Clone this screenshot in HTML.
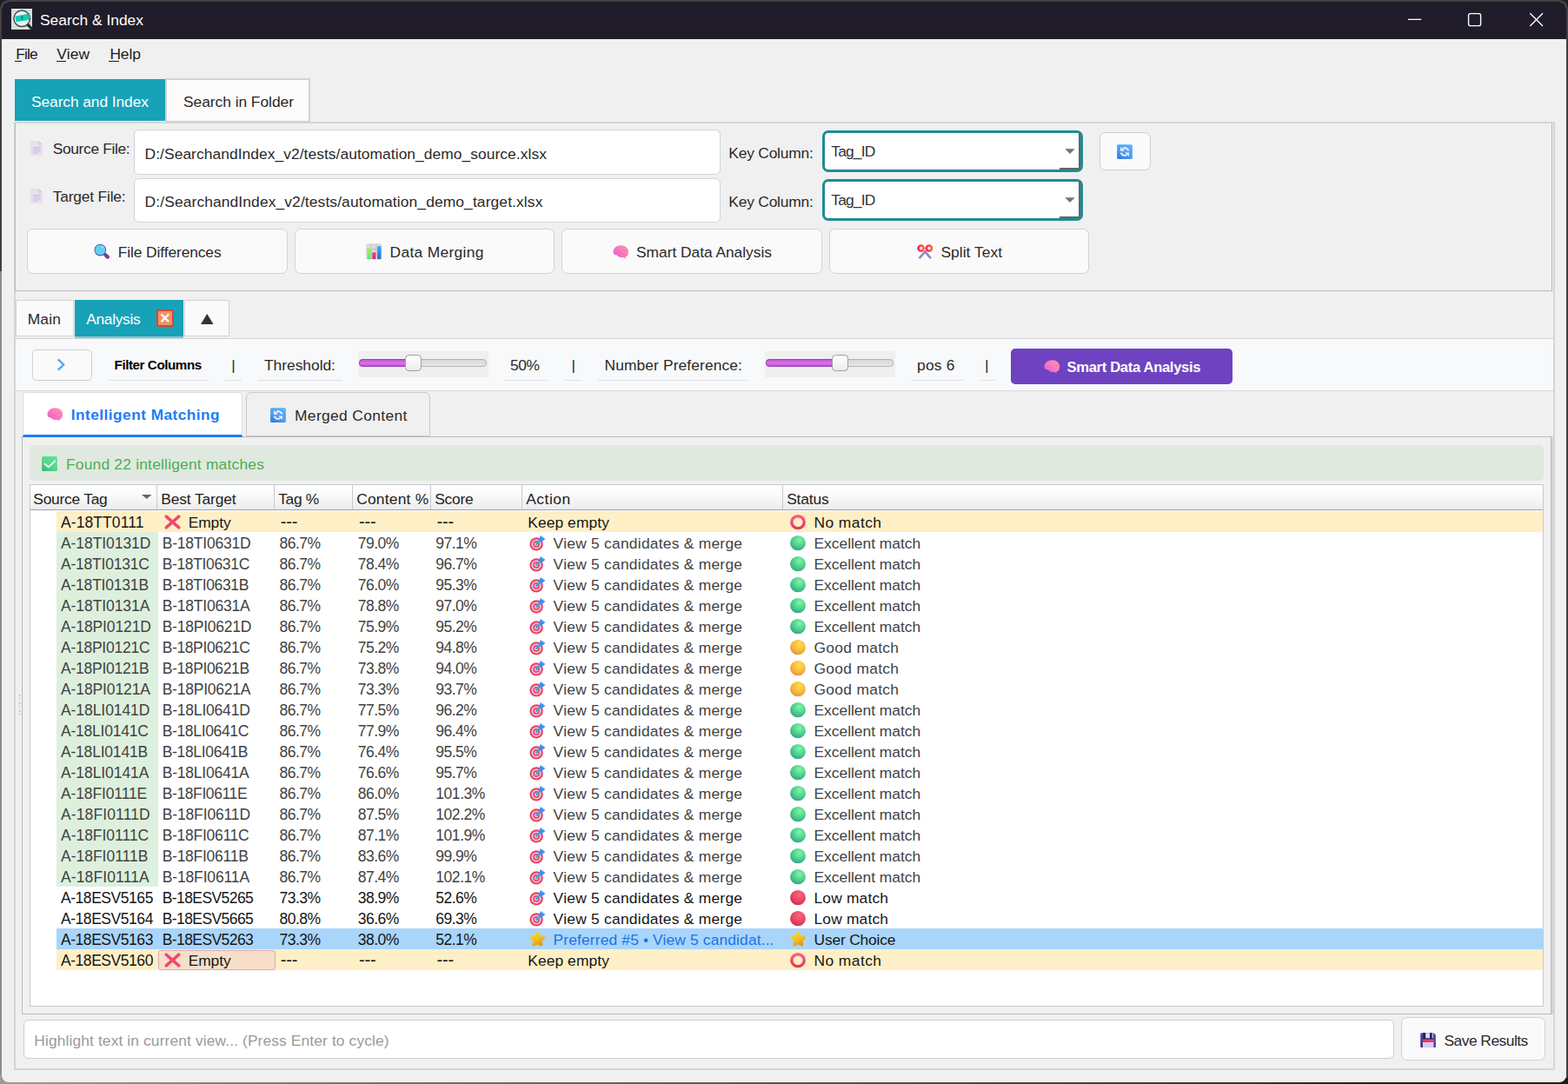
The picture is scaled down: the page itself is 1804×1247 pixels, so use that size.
<!DOCTYPE html>
<html lang="en"><head><meta charset="utf-8"><title>Search &amp; Index</title>
<style>
html,body{margin:0;padding:0}
body{width:1804px;height:1247px;overflow:hidden;background:#2b2b2b;position:relative;font-family:"Liberation Sans",sans-serif;}
div,span.t,svg{position:absolute;box-sizing:border-box}
span.t{white-space:nowrap;line-height:1;}
svg{overflow:visible}
</style></head><body>
<div style="left:0px;top:0px;width:1804px;height:1247px;background:#1c1c1c"></div>
<div style="left:0px;top:0px;width:1804px;height:1247px;background:linear-gradient(#211c29 0,#211c29 40px,#f0f0f0 40px);border:2px solid #404040;border-radius:10px"></div>
<div style="left:0px;top:312px;width:2.2px;height:935px;background:#8e8e8e"></div>
<div style="left:0px;top:1236px;width:12px;height:11px;background:#9a9a9a"></div>
<div style="left:0px;top:1240px;width:1804px;height:7px;background:linear-gradient(90deg,#9a9a9a 0%,#777 20%,#555 50%,#333 80%,#1c1c1c 88%)"></div>
<div id="win" style="left:2px;top:2px;width:1800px;height:1242.6px;background:#f0f0f0;border-radius:8px;overflow:hidden">
<div style="left:-2px;top:-2px;width:1804px;height:1247px">
<div style="left:0px;top:0px;width:1804px;height:44.6px;background:#211c29"></div>
<svg style="left:13px;top:10px;overflow:hidden" width="24" height="24" viewBox="0 0 24 24">
<defs><clipPath id="lens"><circle cx="12.2" cy="11.3" r="8.8"/></clipPath></defs>
<rect x="0" y="0" width="24" height="24" fill="#e3e6e4"/>
<path d="M0 2.5H24M0 5.5H24M0 8.5H24M0 11.5H24M0 14.5H24M0 17.5H24M0 20.5H24M0 23H24" stroke="#c9cecb" stroke-width="1"/>
<circle cx="12.2" cy="11.3" r="9.3" fill="#eef1f0" stroke="#3c5450" stroke-width="1.5"/>
<path d="M4.2 8.7 L21.4 5.5 L22 12.5 L5.6 15.2 Z" fill="#10cdb8" clip-path="url(#lens)"/>
<rect x="11" y="8" width="2.6" height="5" rx="1.2" fill="#0aa08f"/>
<path d="M18.8 18.2 L24 23.6" stroke="#18302c" stroke-width="3.2" stroke-linecap="butt"/>
</svg>
<span class="t" style="left:46.00px;top:14.60px;font-size:17.4px;color:#fff;letter-spacing:0.003px;">Search &amp; Index</span>
<svg style="left:1610px;top:10px" width="180" height="26" viewBox="1610 10 180 26" fill="none" stroke="#fff" stroke-width="1.4">
<path d="M1620 22.4H1635.3"/>
<rect x="1689.6" y="15.6" width="14" height="14" rx="2.2"/>
<path d="M1760.3 15.3L1775 30M1775 15.3L1760.3 30"/>
</svg>
<span class="t" style="left:18.30px;top:53.60px;font-size:17.4px;color:#1a1a1a;letter-spacing:-0.910px;">File</span>
<div style="left:17px;top:70px;width:8.3px;height:1px;background:#1a1a1a"></div>
<span class="t" style="left:65.30px;top:53.60px;font-size:17.4px;color:#1a1a1a;letter-spacing:0.118px;">View</span>
<div style="left:65px;top:70px;width:11px;height:1px;background:#1a1a1a"></div>
<span class="t" style="left:126.40px;top:53.60px;font-size:17.4px;color:#1a1a1a;letter-spacing:-0.097px;">Help</span>
<div style="left:125.3px;top:70px;width:11.8px;height:1px;background:#1a1a1a"></div>
<div style="left:16px;top:140px;width:1772.7px;height:1090.9px;border:2px solid #d6d5d5"></div>
<div style="left:17px;top:91.3px;width:172.5px;height:47.7px;background:#17a2b8"></div>
<span class="t" style="left:36.00px;top:108.60px;font-size:17.4px;color:#fff;letter-spacing:-0.093px;">Search and Index</span>
<div style="left:190.3px;top:90px;width:167.2px;height:51.2px;background:#fbfbfb;border:2px solid #d3d2d2"></div>
<span class="t" style="left:211.00px;top:108.60px;font-size:17.4px;color:#2a2a2a;letter-spacing:-0.044px;">Search in Folder</span>
<div style="left:17px;top:142px;width:1769px;height:192.7px;border:1px solid #b9b9b9;border-top:none"></div>
<svg style="left:35px;top:162px" width="14" height="17" viewBox="0 0 14 17">
<path d="M0 0H9.5L14 4.5V17H0Z" fill="#e7dff1"/><path d="M9.5 0V4.5H14Z" fill="#d2c6e2"/>
<path d="M3 7.6H11.5M3 9.8H11.5M3 12H11.5M3 14.1H8.5" stroke="#c2b6d8" stroke-width="0.9"/></svg>
<span class="t" style="left:60.70px;top:162.60px;font-size:17.4px;color:#2a2a2a;letter-spacing:-0.348px;">Source File:</span>
<div style="left:154px;top:149px;width:674.5px;height:51.5px;background:#fff;border:1px solid #cdd5dd;border-radius:6px"></div>
<span class="t" style="left:166.60px;top:168.60px;font-size:17.4px;color:#2a2a2a;letter-spacing:0.058px;">D:/SearchandIndex_v2/tests/automation_demo_source.xlsx</span>
<span class="t" style="left:838.30px;top:167.60px;font-size:17.4px;color:#2a2a2a;letter-spacing:-0.201px;">Key Column:</span>
<div style="left:946px;top:150px;width:299.5px;height:47.5px;background:#fff;border:3px solid #1c8c96;border-radius:7px"></div>
<span class="t" style="left:956.30px;top:165.60px;font-size:17.4px;color:#333;letter-spacing:-0.825px;">Tag_ID</span>
<svg style="left:1224.5px;top:171.2px" width="12" height="6.2" viewBox="0 0 12 6.2"><path d="M0.2 0.2H11.8L6 6Z" fill="#757575"/></svg>
<div style="left:1218.5px;top:192.9px;width:24px;height:1.8px;background:#666"></div>
<div style="left:1241.2px;top:153px;width:1.8px;height:41.5px;background:#666"></div>
<div style="left:1265.3px;top:151.8px;width:59.2px;height:44.2px;background:#fafafa;border:1.3px solid #d0d0d0;border-radius:7px"></div>
<svg style="left:35px;top:217px" width="14" height="17" viewBox="0 0 14 17">
<path d="M0 0H9.5L14 4.5V17H0Z" fill="#e7dff1"/><path d="M9.5 0V4.5H14Z" fill="#d2c6e2"/>
<path d="M3 7.6H11.5M3 9.8H11.5M3 12H11.5M3 14.1H8.5" stroke="#c2b6d8" stroke-width="0.9"/></svg>
<span class="t" style="left:60.70px;top:217.60px;font-size:17.4px;color:#2a2a2a;letter-spacing:-0.187px;">Target File:</span>
<div style="left:154px;top:204.5px;width:674.5px;height:51.5px;background:#fff;border:1px solid #cdd5dd;border-radius:6px"></div>
<span class="t" style="left:166.60px;top:223.60px;font-size:17.4px;color:#2a2a2a;letter-spacing:0.119px;">D:/SearchandIndex_v2/tests/automation_demo_target.xlsx</span>
<span class="t" style="left:838.30px;top:223.60px;font-size:17.4px;color:#2a2a2a;letter-spacing:-0.201px;">Key Column:</span>
<div style="left:946px;top:206px;width:299.5px;height:47.5px;background:#fff;border:3px solid #1c8c96;border-radius:7px"></div>
<span class="t" style="left:956.30px;top:221.60px;font-size:17.4px;color:#333;letter-spacing:-0.825px;">Tag_ID</span>
<svg style="left:1224.5px;top:227.2px" width="12" height="6.2" viewBox="0 0 12 6.2"><path d="M0.2 0.2H11.8L6 6Z" fill="#757575"/></svg>
<div style="left:1218.5px;top:248.9px;width:24px;height:1.8px;background:#666"></div>
<div style="left:1241.2px;top:209px;width:1.8px;height:41.5px;background:#666"></div>
<div style="left:31px;top:263px;width:299.5px;height:51.5px;background:#fafafa;border:1px solid #d3d3d3;border-radius:7px"></div>
<span class="t" style="left:135.70px;top:281.60px;font-size:17.4px;color:#2a2a2a;letter-spacing:-0.104px;">File Differences</span>
<div style="left:338.5px;top:263px;width:299.5px;height:51.5px;background:#fafafa;border:1px solid #d3d3d3;border-radius:7px"></div>
<span class="t" style="left:448.50px;top:281.60px;font-size:17.4px;color:#2a2a2a;letter-spacing:0.323px;">Data Merging</span>
<div style="left:646px;top:263px;width:299.5px;height:51.5px;background:#fafafa;border:1px solid #d3d3d3;border-radius:7px"></div>
<span class="t" style="left:732.00px;top:281.60px;font-size:17.4px;color:#2a2a2a;letter-spacing:-0.036px;">Smart Data Analysis</span>
<div style="left:953.5px;top:263px;width:299.5px;height:51.5px;background:#fafafa;border:1px solid #d3d3d3;border-radius:7px"></div>
<span class="t" style="left:1082.50px;top:281.60px;font-size:17.4px;color:#2a2a2a;letter-spacing:0.025px;">Split Text</span>
<svg style="left:0;top:0" width="0" height="0"><defs>
<radialGradient id="gGreen" cx="0.6" cy="0.3" r="0.75"><stop offset="0" stop-color="#7df7a6"/><stop offset="0.55" stop-color="#4fd08c"/><stop offset="1" stop-color="#2f9f8a"/></radialGradient>
<radialGradient id="gYellow" cx="0.6" cy="0.3" r="0.75"><stop offset="0" stop-color="#ffdc58"/><stop offset="0.55" stop-color="#f8bb38"/><stop offset="1" stop-color="#e39048"/></radialGradient>
<radialGradient id="gRed" cx="0.6" cy="0.3" r="0.75"><stop offset="0" stop-color="#ff6484"/><stop offset="0.55" stop-color="#ea4863"/><stop offset="1" stop-color="#c23050"/></radialGradient>
<linearGradient id="gRing" x1="0" y1="0" x2="0" y2="1"><stop offset="0" stop-color="#ff5a8c"/><stop offset="1" stop-color="#e23a58"/></linearGradient>
<linearGradient id="gStar" x1="0.2" y1="0" x2="0.7" y2="1"><stop offset="0" stop-color="#fbd22a"/><stop offset="0.6" stop-color="#f2bb1e"/><stop offset="1" stop-color="#dc9a1a"/></linearGradient>
<linearGradient id="gBrain" x1="0.9" y1="0.1" x2="0.1" y2="0.9"><stop offset="0" stop-color="#ff92a4"/><stop offset="0.5" stop-color="#fa78c2"/><stop offset="1" stop-color="#ea5acb"/></linearGradient>
<linearGradient id="gSq" x1="0.8" y1="0" x2="0.2" y2="1"><stop offset="0" stop-color="#5cb2fb"/><stop offset="0.6" stop-color="#4c9df3"/><stop offset="1" stop-color="#3a78df"/></linearGradient>
<linearGradient id="gChk" x1="0.8" y1="0" x2="0.2" y2="1"><stop offset="0" stop-color="#62e39a"/><stop offset="0.6" stop-color="#55d48b"/><stop offset="1" stop-color="#3fb578"/></linearGradient>
<linearGradient id="gSci" x1="0" y1="0" x2="1" y2="0"><stop offset="0" stop-color="#f21f7c"/><stop offset="1" stop-color="#ff6e1c"/></linearGradient>
<linearGradient id="gBarG" x1="0" y1="0" x2="0" y2="1"><stop offset="0" stop-color="#b0f05a"/><stop offset="1" stop-color="#56e39c"/></linearGradient>
<linearGradient id="gBarB" x1="0" y1="0" x2="0" y2="1"><stop offset="0" stop-color="#35aaf5"/><stop offset="1" stop-color="#2f68cc"/></linearGradient>
<linearGradient id="gBarR" x1="0" y1="0" x2="0" y2="1"><stop offset="0" stop-color="#f53a86"/><stop offset="1" stop-color="#e0285a"/></linearGradient>
<linearGradient id="gFlop" x1="0" y1="0" x2="0" y2="1"><stop offset="0" stop-color="#4f4ca2"/><stop offset="1" stop-color="#4a2c7c"/></linearGradient>
<linearGradient id="gFlopR" x1="0" y1="0" x2="1" y2="0"><stop offset="0" stop-color="#ee2440"/><stop offset="1" stop-color="#de3282"/></linearGradient>
</defs></svg>
<svg style="left:108px;top:281px" width="19" height="18" viewBox="0 0 19 18">
<path d="M13 12L15.9 14.6" stroke="#7f3d8e" stroke-width="4.3" stroke-linecap="round"/>
<circle cx="7.3" cy="6.6" r="6.85" fill="#4450ac"/><circle cx="7.3" cy="6.6" r="6" fill="#63cfec"/>
<circle cx="9.6" cy="3.7" r="0.9" fill="#c4ecf8"/></svg>
<svg style="left:420.8px;top:279.6px" width="18.5" height="18.5" viewBox="0 0 18.5 18.5">
<rect x="0.2" y="0.2" width="18" height="18.1" rx="1.6" fill="#ddd8e7"/>
<path d="M6 0.4V18M11.8 0.4V18M0.4 6.6H18M0.4 12.4H18" stroke="#bcb3c9" stroke-width="0.8"/>
<rect x="1.5" y="5.3" width="4.5" height="12.8" fill="url(#gBarG)"/>
<rect x="7.3" y="10.4" width="4" height="7.7" fill="url(#gBarR)"/>
<rect x="13.1" y="3.2" width="4.3" height="14.9" fill="url(#gBarB)"/></svg>
<svg style="left:704.9px;top:281.9px" width="18.4" height="16.00" viewBox="0 0 18.4 16">
<path d="M0.5 8.2C0.2 3.6 4.4 0.3 9.6 0.3C14.6 0.3 18.4 3.6 18.1 8.4C18 11.6 16.2 13.2 14.4 13.5L14.5 15.8L12.2 13.8C9.4 14.4 6.4 13.6 5 11.4C2.6 11.8 0.7 10.4 0.5 8.2Z" fill="url(#gBrain)"/>
<path d="M2.4 4.2L3.4 5M3.8 2.8L4.8 3.7M5.6 1.7L6.4 2.7" stroke="#f0609a" stroke-width="0.7"/>
<path d="M13 6.3H16M6 8.4C7.5 7.4 9 8 9.4 9.4M11.6 10.2L13 10.6" stroke="#f458c2" stroke-width="0.7" fill="none"/></svg>
<svg style="left:1054.9px;top:281px" width="19" height="17" viewBox="0 0 19 17">
<path d="M9.3 8.6L3.3 15.3M9.3 8.6L15.3 15.3" stroke="#9a84c2" stroke-width="2.6" stroke-linecap="round"/>
<circle cx="4.7" cy="4.6" r="3.1" fill="none" stroke="url(#gSci)" stroke-width="2.6"/>
<circle cx="13.9" cy="4.6" r="3.1" fill="none" stroke="url(#gSci)" stroke-width="2.6"/>
<circle cx="9.3" cy="8" r="1.1" fill="#f5503a"/></svg>
<svg style="left:1285.1px;top:165.8px" width="18" height="17.2" viewBox="0 0 18 17.2">
<rect x="0.1" y="0.2" width="17.8" height="16.9" rx="1.6" fill="url(#gSq)"/>
<path d="M13.4 7.4A4.6 4.6 0 0 0 6.8 4.9" fill="none" stroke="#fdeffd" stroke-width="1.9"/>
<path d="M4.1 3.1V7.7H8.8Z" fill="#fdeffd"/>
<path d="M4.6 9.8A4.6 4.6 0 0 0 11.2 12.3" fill="none" stroke="#fdeffd" stroke-width="1.9"/>
<path d="M13.9 14.1V9.5H9.2Z" fill="#fdeffd"/></svg>
<div style="left:18px;top:344.7px;width:67px;height:42.6px;background:#fafafa;border:1.3px solid #d3d3d3"></div>
<span class="t" style="left:31.70px;top:358.60px;font-size:17.4px;color:#2a2a2a;letter-spacing:0.159px;">Main</span>
<div style="left:85.9px;top:344.7px;width:124.8px;height:42.2px;background:#17a2b8"></div>
<div style="left:85.9px;top:387.4px;width:124.8px;height:1.2px;background:#8fc4cc"></div>
<span class="t" style="left:99.20px;top:358.60px;font-size:17.4px;color:#fff;letter-spacing:-0.328px;">Analysis</span>
<div style="left:179.6px;top:355.5px;width:20.8px;height:20.9px;background:#ee9468;border:2px solid #dc4632;border-radius:3px"></div>
<svg style="left:185.4px;top:361.3px" width="9.6" height="9.6" viewBox="0 0 10 10"><path d="M1.2 1.2L8.8 8.8M8.8 1.2L1.2 8.8" stroke="#fff" stroke-width="2.3" stroke-linecap="round"/></svg>
<div style="left:211.8px;top:344.7px;width:52px;height:42.6px;background:#fafafa;border:1.3px solid #d3d3d3"></div>
<svg style="left:231px;top:361px" width="14.5" height="12" viewBox="0 0 14.5 12"><path d="M7.25 0L14.5 12H0Z" fill="#333"/></svg>
<div style="left:18px;top:388.5px;width:1768.5px;height:61.5px;background:#f8f9fa;border-top:1.5px solid #d4d4d4;border-bottom:1.2px solid #d6dade"></div>
<div style="left:37px;top:401.5px;width:68.5px;height:36px;background:#fafafa;border:1px solid #d0d0d0;border-radius:5px"></div>
<svg style="left:65px;top:412px" width="10" height="15" viewBox="0 0 10 15"><path d="M1.8 1.4L8.2 7.5L1.8 13.6" fill="none" stroke="#4da3f5" stroke-width="2.2"/></svg>
<div style="left:124.3px;top:436.6px;width:116.10000000000001px;height:1.1px;background:#dde1e6"></div>
<span class="t" style="left:131.60px;top:412.20px;font-size:15.2px;color:#000;font-weight:bold;letter-spacing:-0.440px;">Filter Columns</span>
<div style="left:259px;top:436.6px;width:19px;height:1.1px;background:#dde1e6"></div>
<span class="t" style="left:266.20px;top:411.60px;font-size:17.4px;color:#2a2a2a;">|</span>
<div style="left:296px;top:436.6px;width:97.5px;height:1.1px;background:#dde1e6"></div>
<span class="t" style="left:304.00px;top:411.60px;font-size:17.4px;color:#2a2a2a;letter-spacing:-0.024px;">Threshold:</span>
<div style="left:580px;top:436.6px;width:52px;height:1.1px;background:#dde1e6"></div>
<span class="t" style="left:587.00px;top:411.60px;font-size:17.4px;color:#2a2a2a;letter-spacing:-0.409px;">50%</span>
<div style="left:650px;top:436.6px;width:19px;height:1.1px;background:#dde1e6"></div>
<span class="t" style="left:657.50px;top:411.60px;font-size:17.4px;color:#2a2a2a;">|</span>
<div style="left:688px;top:436.6px;width:173.5px;height:1.1px;background:#dde1e6"></div>
<span class="t" style="left:695.50px;top:411.60px;font-size:17.4px;color:#2a2a2a;letter-spacing:0.108px;">Number Preference:</span>
<div style="left:1047.5px;top:436.6px;width:60.0px;height:1.1px;background:#dde1e6"></div>
<span class="t" style="left:1055.00px;top:411.60px;font-size:17.4px;color:#2a2a2a;letter-spacing:0.235px;">pos 6</span>
<div style="left:1126px;top:436.6px;width:19px;height:1.1px;background:#dde1e6"></div>
<span class="t" style="left:1133.00px;top:411.60px;font-size:17.4px;color:#2a2a2a;">|</span>
<div style="left:412px;top:404px;width:150px;height:30px;background:#efefef"></div>
<div style="left:413px;top:413.2px;width:147px;height:8.4px;background:linear-gradient(#d8d8d8,#e6e6e6);border:1px solid #b4b4b4;border-radius:4px"></div>
<div style="left:413px;top:413.2px;width:57.5px;height:8.4px;background:linear-gradient(#c254d6,#d873ea 50%,#c254d6);border:1px solid #9c3fb2;border-radius:4px"></div>
<div style="left:465.5px;top:408px;width:19.2px;height:19px;background:linear-gradient(#ffffff,#ececec);border:1px solid #9c9c9c;border-radius:4.5px"></div>
<div style="left:880px;top:404px;width:150px;height:30px;background:#efefef"></div>
<div style="left:881px;top:413.2px;width:147px;height:8.4px;background:linear-gradient(#d8d8d8,#e6e6e6);border:1px solid #b4b4b4;border-radius:4px"></div>
<div style="left:881px;top:413.2px;width:81px;height:8.4px;background:linear-gradient(#c254d6,#d873ea 50%,#c254d6);border:1px solid #9c3fb2;border-radius:4px"></div>
<div style="left:957px;top:408px;width:19.2px;height:19px;background:linear-gradient(#ffffff,#ececec);border:1px solid #9c9c9c;border-radius:4.5px"></div>
<div style="left:1163px;top:401px;width:255px;height:41.3px;background:#6f42c1;border-radius:5px"></div>
<svg style="left:1201.3px;top:414px" width="18.4" height="16.00" viewBox="0 0 18.4 16">
<path d="M0.5 8.2C0.2 3.6 4.4 0.3 9.6 0.3C14.6 0.3 18.4 3.6 18.1 8.4C18 11.6 16.2 13.2 14.4 13.5L14.5 15.8L12.2 13.8C9.4 14.4 6.4 13.6 5 11.4C2.6 11.8 0.7 10.4 0.5 8.2Z" fill="url(#gBrain)"/>
<path d="M2.4 4.2L3.4 5M3.8 2.8L4.8 3.7M5.6 1.7L6.4 2.7" stroke="#f0609a" stroke-width="0.7"/>
<path d="M13 6.3H16M6 8.4C7.5 7.4 9 8 9.4 9.4M11.6 10.2L13 10.6" stroke="#f458c2" stroke-width="0.7" fill="none"/></svg>
<span class="t" style="left:1227.50px;top:414.50px;font-size:16.6px;color:#fff;font-weight:bold;letter-spacing:-0.329px;">Smart Data Analysis</span>
<div style="left:25px;top:502.4px;width:1760.3px;height:664.6px;border:1.2px solid #b9b9b9;border-top:1.6px solid #bcbcbc;background:#f0f0f0"></div>
<div style="left:1785.3px;top:502.4px;width:1.6px;height:664.6px;background:#d6d5d5"></div>
<div style="left:25.5px;top:450.8px;width:253.5px;height:52px;background:#fff;border:1px solid #dcdcdc;border-bottom:3.2px solid #1a7df5;border-radius:5px 5px 0 0"></div>
<svg style="left:53.6px;top:468.7px" width="18.4" height="16.00" viewBox="0 0 18.4 16">
<path d="M0.5 8.2C0.2 3.6 4.4 0.3 9.6 0.3C14.6 0.3 18.4 3.6 18.1 8.4C18 11.6 16.2 13.2 14.4 13.5L14.5 15.8L12.2 13.8C9.4 14.4 6.4 13.6 5 11.4C2.6 11.8 0.7 10.4 0.5 8.2Z" fill="url(#gBrain)"/>
<path d="M2.4 4.2L3.4 5M3.8 2.8L4.8 3.7M5.6 1.7L6.4 2.7" stroke="#f0609a" stroke-width="0.7"/>
<path d="M13 6.3H16M6 8.4C7.5 7.4 9 8 9.4 9.4M11.6 10.2L13 10.6" stroke="#f458c2" stroke-width="0.7" fill="none"/></svg>
<span class="t" style="left:81.70px;top:468.70px;font-size:17.2px;color:#1a7df5;font-weight:bold;letter-spacing:0.500px;">Intelligent Matching</span>
<div style="left:283px;top:450.8px;width:212px;height:51.2px;background:#f0f0f0;border:1.4px solid #c9c9c9;border-radius:6px 6px 0 0"></div>
<svg style="left:310.6px;top:468.6px" width="18" height="17.2" viewBox="0 0 18 17.2">
<rect x="0.1" y="0.2" width="17.8" height="16.9" rx="1.6" fill="url(#gSq)"/>
<path d="M13.4 7.4A4.6 4.6 0 0 0 6.8 4.9" fill="none" stroke="#fdeffd" stroke-width="1.9"/>
<path d="M4.1 3.1V7.7H8.8Z" fill="#fdeffd"/>
<path d="M4.6 9.8A4.6 4.6 0 0 0 11.2 12.3" fill="none" stroke="#fdeffd" stroke-width="1.9"/>
<path d="M13.9 14.1V9.5H9.2Z" fill="#fdeffd"/></svg>
<span class="t" style="left:339.00px;top:469.60px;font-size:17.4px;color:#2a2a2a;letter-spacing:0.363px;">Merged Content</span>
<div style="left:34px;top:512.2px;width:1742px;height:41.3px;background:#dfe9df;border-radius:5px"></div>
<svg style="left:48.1px;top:524.8px" width="18" height="17.2" viewBox="0 0 18 17.2">
<rect x="0.1" y="0.1" width="17.8" height="17" rx="1.6" fill="url(#gChk)"/>
<path d="M3.5 8.7L7.7 12.4L15.2 5.3" stroke="#fff3ff" stroke-width="1.8" fill="none" stroke-linecap="round" stroke-linejoin="round"/></svg>
<span class="t" style="left:76.00px;top:525.60px;font-size:17.4px;color:#4caf50;letter-spacing:0.205px;">Found 22 intelligent matches</span>
<div style="left:34px;top:557px;width:1742.3px;height:600.5px;background:#fff;border:1px solid #c3ccd6"></div>
<div style="left:35px;top:558px;width:1740.3px;height:28.8px;background:linear-gradient(#fdfdfd 0%,#fbfbfb 35%,#ececec 100%);border-bottom:1.4px solid #a2a2a2"></div>
<span class="t" style="left:38.30px;top:565.60px;font-size:17.4px;color:#222;letter-spacing:-0.246px;">Source Tag</span>
<span class="t" style="left:185.20px;top:565.60px;font-size:17.4px;color:#222;letter-spacing:-0.120px;">Best Target</span>
<div style="left:180.0px;top:558px;width:1.2px;height:28px;background:#c9c9c9"></div>
<span class="t" style="left:320.20px;top:565.60px;font-size:17.4px;color:#222;letter-spacing:-0.339px;">Tag %</span>
<div style="left:315.0px;top:558px;width:1.2px;height:28px;background:#c9c9c9"></div>
<span class="t" style="left:410.20px;top:565.60px;font-size:17.4px;color:#222;letter-spacing:0.220px;">Content %</span>
<div style="left:405.0px;top:558px;width:1.2px;height:28px;background:#c9c9c9"></div>
<span class="t" style="left:500.20px;top:565.60px;font-size:17.4px;color:#222;letter-spacing:-0.237px;">Score</span>
<div style="left:495.0px;top:558px;width:1.2px;height:28px;background:#c9c9c9"></div>
<span class="t" style="left:605.20px;top:565.60px;font-size:17.4px;color:#222;letter-spacing:0.529px;">Action</span>
<div style="left:600.0px;top:558px;width:1.2px;height:28px;background:#c9c9c9"></div>
<span class="t" style="left:905.20px;top:565.60px;font-size:17.4px;color:#222;letter-spacing:-0.166px;">Status</span>
<div style="left:900.0px;top:558px;width:1.2px;height:28px;background:#c9c9c9"></div>
<svg style="left:162.5px;top:568.7px" width="11.5" height="5" viewBox="0 0 11.5 5"><path d="M0 0H11.5L5.75 5Z" fill="#666"/></svg>
<div style="left:65px;top:588px;width:1710.3px;height:24px;background:#ffefc6"></div>
<span class="t" style="left:70.00px;top:592.55px;font-size:17.5px;color:#161616;letter-spacing:0.079px;">A-18TT0111</span>
<svg style="left:189px;top:592px" width="19" height="17" viewBox="0 0 19 17">
<path d="M2.2 2.2L16.8 14.8M16.8 2.2L2.2 14.8" stroke="#f2496e" stroke-width="3.6" stroke-linecap="round"/></svg>
<span class="t" style="left:216.70px;top:592.60px;font-size:17.4px;color:#161616;letter-spacing:-0.078px;">Empty</span>
<span class="t" style="left:322.70px;top:590.30px;font-size:20px;color:#161616;letter-spacing:-0.190px;">---</span>
<span class="t" style="left:413.00px;top:590.30px;font-size:20px;color:#161616;letter-spacing:-0.190px;">---</span>
<span class="t" style="left:502.50px;top:590.30px;font-size:20px;color:#161616;letter-spacing:-0.190px;">---</span>
<span class="t" style="left:607.20px;top:592.60px;font-size:17.4px;color:#161616;letter-spacing:0.095px;">Keep empty</span>
<svg style="left:909.1px;top:591.6px" width="18" height="17.4" viewBox="0 0 18 17.4">
<ellipse cx="9" cy="8.7" rx="7.25" ry="6.95" fill="none" stroke="url(#gRing)" stroke-width="3.4"/></svg>
<span class="t" style="left:936.50px;top:592.60px;font-size:17.4px;color:#161616;letter-spacing:0.435px;">No match</span>
<div style="left:65px;top:612px;width:116.5px;height:24px;background:#ddf0dd"></div>
<span class="t" style="left:70.00px;top:616.55px;font-size:17.5px;color:#424242;letter-spacing:-0.073px;">A-18TI0131D</span>
<span class="t" style="left:186.70px;top:616.55px;font-size:17.5px;color:#424242;letter-spacing:-0.203px;">B-18TI0631D</span>
<span class="t" style="left:321.50px;top:616.55px;font-size:17.5px;color:#424242;letter-spacing:-0.544px;">86.7%</span>
<span class="t" style="left:411.80px;top:616.55px;font-size:17.5px;color:#424242;letter-spacing:-0.544px;">79.0%</span>
<span class="t" style="left:501.30px;top:616.55px;font-size:17.5px;color:#424242;letter-spacing:-0.544px;">97.1%</span>
<svg style="left:609px;top:615.6px" width="18.5" height="18" viewBox="0 0 18.5 18">
<circle cx="8.1" cy="9.9" r="7.7" fill="#ea4568"/><circle cx="8.1" cy="9.9" r="5.5" fill="#ead6e2"/>
<circle cx="8.1" cy="9.9" r="3.9" fill="#ea4568"/><circle cx="8.1" cy="9.9" r="2.2" fill="#e2cfdc"/><circle cx="8.1" cy="9.9" r="0.9" fill="#9a8f9d"/>
<path d="M8.5 9.5L13.4 4.6" stroke="#3fa4ee" stroke-width="2.6" stroke-linecap="round"/>
<path d="M11.2 5.4L12.4 0.8L14 0.2L14.5 2.2L16.2 1.2L16.3 3.2L18.2 3.2L17.4 5L13.2 7.4Z" fill="#3a90f0"/></svg>
<span class="t" style="left:636.60px;top:616.60px;font-size:17.4px;color:#424242;letter-spacing:0.250px;">View 5 candidates &amp; merge</span>
<svg style="left:909.1px;top:615.5px" width="18" height="17.4" viewBox="0 0 18 17.4">
<ellipse cx="9" cy="8.7" rx="8.95" ry="8.65" fill="url(#gGreen)"/></svg>
<span class="t" style="left:936.50px;top:616.60px;font-size:17.4px;color:#424242;letter-spacing:-0.009px;">Excellent match</span>
<div style="left:65px;top:636px;width:116.5px;height:24px;background:#ddf0dd"></div>
<span class="t" style="left:70.00px;top:640.55px;font-size:17.5px;color:#424242;letter-spacing:-0.221px;">A-18TI0131C</span>
<span class="t" style="left:186.70px;top:640.55px;font-size:17.5px;color:#424242;letter-spacing:-0.350px;">B-18TI0631C</span>
<span class="t" style="left:321.50px;top:640.55px;font-size:17.5px;color:#424242;letter-spacing:-0.544px;">86.7%</span>
<span class="t" style="left:411.80px;top:640.55px;font-size:17.5px;color:#424242;letter-spacing:-0.544px;">78.4%</span>
<span class="t" style="left:501.30px;top:640.55px;font-size:17.5px;color:#424242;letter-spacing:-0.544px;">96.7%</span>
<svg style="left:609px;top:639.6px" width="18.5" height="18" viewBox="0 0 18.5 18">
<circle cx="8.1" cy="9.9" r="7.7" fill="#ea4568"/><circle cx="8.1" cy="9.9" r="5.5" fill="#ead6e2"/>
<circle cx="8.1" cy="9.9" r="3.9" fill="#ea4568"/><circle cx="8.1" cy="9.9" r="2.2" fill="#e2cfdc"/><circle cx="8.1" cy="9.9" r="0.9" fill="#9a8f9d"/>
<path d="M8.5 9.5L13.4 4.6" stroke="#3fa4ee" stroke-width="2.6" stroke-linecap="round"/>
<path d="M11.2 5.4L12.4 0.8L14 0.2L14.5 2.2L16.2 1.2L16.3 3.2L18.2 3.2L17.4 5L13.2 7.4Z" fill="#3a90f0"/></svg>
<span class="t" style="left:636.60px;top:640.60px;font-size:17.4px;color:#424242;letter-spacing:0.250px;">View 5 candidates &amp; merge</span>
<svg style="left:909.1px;top:639.5px" width="18" height="17.4" viewBox="0 0 18 17.4">
<ellipse cx="9" cy="8.7" rx="8.95" ry="8.65" fill="url(#gGreen)"/></svg>
<span class="t" style="left:936.50px;top:640.60px;font-size:17.4px;color:#424242;letter-spacing:-0.009px;">Excellent match</span>
<div style="left:65px;top:660px;width:116.5px;height:24px;background:#ddf0dd"></div>
<span class="t" style="left:70.00px;top:664.55px;font-size:17.5px;color:#424242;letter-spacing:-0.207px;">A-18TI0131B</span>
<span class="t" style="left:186.70px;top:664.55px;font-size:17.5px;color:#424242;letter-spacing:-0.337px;">B-18TI0631B</span>
<span class="t" style="left:321.50px;top:664.55px;font-size:17.5px;color:#424242;letter-spacing:-0.544px;">86.7%</span>
<span class="t" style="left:411.80px;top:664.55px;font-size:17.5px;color:#424242;letter-spacing:-0.544px;">76.0%</span>
<span class="t" style="left:501.30px;top:664.55px;font-size:17.5px;color:#424242;letter-spacing:-0.544px;">95.3%</span>
<svg style="left:609px;top:663.6px" width="18.5" height="18" viewBox="0 0 18.5 18">
<circle cx="8.1" cy="9.9" r="7.7" fill="#ea4568"/><circle cx="8.1" cy="9.9" r="5.5" fill="#ead6e2"/>
<circle cx="8.1" cy="9.9" r="3.9" fill="#ea4568"/><circle cx="8.1" cy="9.9" r="2.2" fill="#e2cfdc"/><circle cx="8.1" cy="9.9" r="0.9" fill="#9a8f9d"/>
<path d="M8.5 9.5L13.4 4.6" stroke="#3fa4ee" stroke-width="2.6" stroke-linecap="round"/>
<path d="M11.2 5.4L12.4 0.8L14 0.2L14.5 2.2L16.2 1.2L16.3 3.2L18.2 3.2L17.4 5L13.2 7.4Z" fill="#3a90f0"/></svg>
<span class="t" style="left:636.60px;top:664.60px;font-size:17.4px;color:#424242;letter-spacing:0.250px;">View 5 candidates &amp; merge</span>
<svg style="left:909.1px;top:663.5px" width="18" height="17.4" viewBox="0 0 18 17.4">
<ellipse cx="9" cy="8.7" rx="8.95" ry="8.65" fill="url(#gGreen)"/></svg>
<span class="t" style="left:936.50px;top:664.60px;font-size:17.4px;color:#424242;letter-spacing:-0.009px;">Excellent match</span>
<div style="left:65px;top:684px;width:116.5px;height:24px;background:#ddf0dd"></div>
<span class="t" style="left:70.00px;top:688.55px;font-size:17.5px;color:#424242;letter-spacing:-0.078px;">A-18TI0131A</span>
<span class="t" style="left:186.70px;top:688.55px;font-size:17.5px;color:#424242;letter-spacing:-0.207px;">B-18TI0631A</span>
<span class="t" style="left:321.50px;top:688.55px;font-size:17.5px;color:#424242;letter-spacing:-0.544px;">86.7%</span>
<span class="t" style="left:411.80px;top:688.55px;font-size:17.5px;color:#424242;letter-spacing:-0.544px;">78.8%</span>
<span class="t" style="left:501.30px;top:688.55px;font-size:17.5px;color:#424242;letter-spacing:-0.544px;">97.0%</span>
<svg style="left:609px;top:687.6px" width="18.5" height="18" viewBox="0 0 18.5 18">
<circle cx="8.1" cy="9.9" r="7.7" fill="#ea4568"/><circle cx="8.1" cy="9.9" r="5.5" fill="#ead6e2"/>
<circle cx="8.1" cy="9.9" r="3.9" fill="#ea4568"/><circle cx="8.1" cy="9.9" r="2.2" fill="#e2cfdc"/><circle cx="8.1" cy="9.9" r="0.9" fill="#9a8f9d"/>
<path d="M8.5 9.5L13.4 4.6" stroke="#3fa4ee" stroke-width="2.6" stroke-linecap="round"/>
<path d="M11.2 5.4L12.4 0.8L14 0.2L14.5 2.2L16.2 1.2L16.3 3.2L18.2 3.2L17.4 5L13.2 7.4Z" fill="#3a90f0"/></svg>
<span class="t" style="left:636.60px;top:688.60px;font-size:17.4px;color:#424242;letter-spacing:0.250px;">View 5 candidates &amp; merge</span>
<svg style="left:909.1px;top:687.5px" width="18" height="17.4" viewBox="0 0 18 17.4">
<ellipse cx="9" cy="8.7" rx="8.95" ry="8.65" fill="url(#gGreen)"/></svg>
<span class="t" style="left:936.50px;top:688.60px;font-size:17.4px;color:#424242;letter-spacing:-0.009px;">Excellent match</span>
<div style="left:65px;top:708px;width:116.5px;height:24px;background:#ddf0dd"></div>
<span class="t" style="left:70.00px;top:712.55px;font-size:17.5px;color:#424242;letter-spacing:-0.106px;">A-18PI0121D</span>
<span class="t" style="left:186.70px;top:712.55px;font-size:17.5px;color:#424242;letter-spacing:-0.236px;">B-18PI0621D</span>
<span class="t" style="left:321.50px;top:712.55px;font-size:17.5px;color:#424242;letter-spacing:-0.544px;">86.7%</span>
<span class="t" style="left:411.80px;top:712.55px;font-size:17.5px;color:#424242;letter-spacing:-0.544px;">75.9%</span>
<span class="t" style="left:501.30px;top:712.55px;font-size:17.5px;color:#424242;letter-spacing:-0.544px;">95.2%</span>
<svg style="left:609px;top:711.6px" width="18.5" height="18" viewBox="0 0 18.5 18">
<circle cx="8.1" cy="9.9" r="7.7" fill="#ea4568"/><circle cx="8.1" cy="9.9" r="5.5" fill="#ead6e2"/>
<circle cx="8.1" cy="9.9" r="3.9" fill="#ea4568"/><circle cx="8.1" cy="9.9" r="2.2" fill="#e2cfdc"/><circle cx="8.1" cy="9.9" r="0.9" fill="#9a8f9d"/>
<path d="M8.5 9.5L13.4 4.6" stroke="#3fa4ee" stroke-width="2.6" stroke-linecap="round"/>
<path d="M11.2 5.4L12.4 0.8L14 0.2L14.5 2.2L16.2 1.2L16.3 3.2L18.2 3.2L17.4 5L13.2 7.4Z" fill="#3a90f0"/></svg>
<span class="t" style="left:636.60px;top:712.60px;font-size:17.4px;color:#424242;letter-spacing:0.250px;">View 5 candidates &amp; merge</span>
<svg style="left:909.1px;top:711.5px" width="18" height="17.4" viewBox="0 0 18 17.4">
<ellipse cx="9" cy="8.7" rx="8.95" ry="8.65" fill="url(#gGreen)"/></svg>
<span class="t" style="left:936.50px;top:712.60px;font-size:17.4px;color:#424242;letter-spacing:-0.009px;">Excellent match</span>
<div style="left:65px;top:732px;width:116.5px;height:24px;background:#ddf0dd"></div>
<span class="t" style="left:70.00px;top:736.55px;font-size:17.5px;color:#424242;letter-spacing:-0.254px;">A-18PI0121C</span>
<span class="t" style="left:186.70px;top:736.55px;font-size:17.5px;color:#424242;letter-spacing:-0.383px;">B-18PI0621C</span>
<span class="t" style="left:321.50px;top:736.55px;font-size:17.5px;color:#424242;letter-spacing:-0.544px;">86.7%</span>
<span class="t" style="left:411.80px;top:736.55px;font-size:17.5px;color:#424242;letter-spacing:-0.544px;">75.2%</span>
<span class="t" style="left:501.30px;top:736.55px;font-size:17.5px;color:#424242;letter-spacing:-0.544px;">94.8%</span>
<svg style="left:609px;top:735.6px" width="18.5" height="18" viewBox="0 0 18.5 18">
<circle cx="8.1" cy="9.9" r="7.7" fill="#ea4568"/><circle cx="8.1" cy="9.9" r="5.5" fill="#ead6e2"/>
<circle cx="8.1" cy="9.9" r="3.9" fill="#ea4568"/><circle cx="8.1" cy="9.9" r="2.2" fill="#e2cfdc"/><circle cx="8.1" cy="9.9" r="0.9" fill="#9a8f9d"/>
<path d="M8.5 9.5L13.4 4.6" stroke="#3fa4ee" stroke-width="2.6" stroke-linecap="round"/>
<path d="M11.2 5.4L12.4 0.8L14 0.2L14.5 2.2L16.2 1.2L16.3 3.2L18.2 3.2L17.4 5L13.2 7.4Z" fill="#3a90f0"/></svg>
<span class="t" style="left:636.60px;top:736.60px;font-size:17.4px;color:#424242;letter-spacing:0.250px;">View 5 candidates &amp; merge</span>
<svg style="left:909.1px;top:735.5px" width="18" height="17.4" viewBox="0 0 18 17.4">
<ellipse cx="9" cy="8.7" rx="8.95" ry="8.65" fill="url(#gYellow)"/></svg>
<span class="t" style="left:936.50px;top:736.60px;font-size:17.4px;color:#424242;letter-spacing:0.302px;">Good match</span>
<div style="left:65px;top:756px;width:116.5px;height:24px;background:#ddf0dd"></div>
<span class="t" style="left:70.00px;top:760.55px;font-size:17.5px;color:#424242;letter-spacing:-0.240px;">A-18PI0121B</span>
<span class="t" style="left:186.70px;top:760.55px;font-size:17.5px;color:#424242;letter-spacing:-0.370px;">B-18PI0621B</span>
<span class="t" style="left:321.50px;top:760.55px;font-size:17.5px;color:#424242;letter-spacing:-0.544px;">86.7%</span>
<span class="t" style="left:411.80px;top:760.55px;font-size:17.5px;color:#424242;letter-spacing:-0.544px;">73.8%</span>
<span class="t" style="left:501.30px;top:760.55px;font-size:17.5px;color:#424242;letter-spacing:-0.544px;">94.0%</span>
<svg style="left:609px;top:759.6px" width="18.5" height="18" viewBox="0 0 18.5 18">
<circle cx="8.1" cy="9.9" r="7.7" fill="#ea4568"/><circle cx="8.1" cy="9.9" r="5.5" fill="#ead6e2"/>
<circle cx="8.1" cy="9.9" r="3.9" fill="#ea4568"/><circle cx="8.1" cy="9.9" r="2.2" fill="#e2cfdc"/><circle cx="8.1" cy="9.9" r="0.9" fill="#9a8f9d"/>
<path d="M8.5 9.5L13.4 4.6" stroke="#3fa4ee" stroke-width="2.6" stroke-linecap="round"/>
<path d="M11.2 5.4L12.4 0.8L14 0.2L14.5 2.2L16.2 1.2L16.3 3.2L18.2 3.2L17.4 5L13.2 7.4Z" fill="#3a90f0"/></svg>
<span class="t" style="left:636.60px;top:760.60px;font-size:17.4px;color:#424242;letter-spacing:0.250px;">View 5 candidates &amp; merge</span>
<svg style="left:909.1px;top:759.5px" width="18" height="17.4" viewBox="0 0 18 17.4">
<ellipse cx="9" cy="8.7" rx="8.95" ry="8.65" fill="url(#gYellow)"/></svg>
<span class="t" style="left:936.50px;top:760.60px;font-size:17.4px;color:#424242;letter-spacing:0.302px;">Good match</span>
<div style="left:65px;top:780px;width:116.5px;height:24px;background:#ddf0dd"></div>
<span class="t" style="left:70.00px;top:784.55px;font-size:17.5px;color:#424242;letter-spacing:-0.111px;">A-18PI0121A</span>
<span class="t" style="left:186.70px;top:784.55px;font-size:17.5px;color:#424242;letter-spacing:-0.240px;">B-18PI0621A</span>
<span class="t" style="left:321.50px;top:784.55px;font-size:17.5px;color:#424242;letter-spacing:-0.544px;">86.7%</span>
<span class="t" style="left:411.80px;top:784.55px;font-size:17.5px;color:#424242;letter-spacing:-0.544px;">73.3%</span>
<span class="t" style="left:501.30px;top:784.55px;font-size:17.5px;color:#424242;letter-spacing:-0.544px;">93.7%</span>
<svg style="left:609px;top:783.6px" width="18.5" height="18" viewBox="0 0 18.5 18">
<circle cx="8.1" cy="9.9" r="7.7" fill="#ea4568"/><circle cx="8.1" cy="9.9" r="5.5" fill="#ead6e2"/>
<circle cx="8.1" cy="9.9" r="3.9" fill="#ea4568"/><circle cx="8.1" cy="9.9" r="2.2" fill="#e2cfdc"/><circle cx="8.1" cy="9.9" r="0.9" fill="#9a8f9d"/>
<path d="M8.5 9.5L13.4 4.6" stroke="#3fa4ee" stroke-width="2.6" stroke-linecap="round"/>
<path d="M11.2 5.4L12.4 0.8L14 0.2L14.5 2.2L16.2 1.2L16.3 3.2L18.2 3.2L17.4 5L13.2 7.4Z" fill="#3a90f0"/></svg>
<span class="t" style="left:636.60px;top:784.60px;font-size:17.4px;color:#424242;letter-spacing:0.250px;">View 5 candidates &amp; merge</span>
<svg style="left:909.1px;top:783.5px" width="18" height="17.4" viewBox="0 0 18 17.4">
<ellipse cx="9" cy="8.7" rx="8.95" ry="8.65" fill="url(#gYellow)"/></svg>
<span class="t" style="left:936.50px;top:784.60px;font-size:17.4px;color:#424242;letter-spacing:0.302px;">Good match</span>
<div style="left:65px;top:804px;width:116.5px;height:24px;background:#ddf0dd"></div>
<span class="t" style="left:70.00px;top:808.55px;font-size:17.5px;color:#424242;letter-spacing:-0.072px;">A-18LI0141D</span>
<span class="t" style="left:186.70px;top:808.55px;font-size:17.5px;color:#424242;letter-spacing:-0.202px;">B-18LI0641D</span>
<span class="t" style="left:321.50px;top:808.55px;font-size:17.5px;color:#424242;letter-spacing:-0.544px;">86.7%</span>
<span class="t" style="left:411.80px;top:808.55px;font-size:17.5px;color:#424242;letter-spacing:-0.544px;">77.5%</span>
<span class="t" style="left:501.30px;top:808.55px;font-size:17.5px;color:#424242;letter-spacing:-0.544px;">96.2%</span>
<svg style="left:609px;top:807.6px" width="18.5" height="18" viewBox="0 0 18.5 18">
<circle cx="8.1" cy="9.9" r="7.7" fill="#ea4568"/><circle cx="8.1" cy="9.9" r="5.5" fill="#ead6e2"/>
<circle cx="8.1" cy="9.9" r="3.9" fill="#ea4568"/><circle cx="8.1" cy="9.9" r="2.2" fill="#e2cfdc"/><circle cx="8.1" cy="9.9" r="0.9" fill="#9a8f9d"/>
<path d="M8.5 9.5L13.4 4.6" stroke="#3fa4ee" stroke-width="2.6" stroke-linecap="round"/>
<path d="M11.2 5.4L12.4 0.8L14 0.2L14.5 2.2L16.2 1.2L16.3 3.2L18.2 3.2L17.4 5L13.2 7.4Z" fill="#3a90f0"/></svg>
<span class="t" style="left:636.60px;top:808.60px;font-size:17.4px;color:#424242;letter-spacing:0.250px;">View 5 candidates &amp; merge</span>
<svg style="left:909.1px;top:807.5px" width="18" height="17.4" viewBox="0 0 18 17.4">
<ellipse cx="9" cy="8.7" rx="8.95" ry="8.65" fill="url(#gGreen)"/></svg>
<span class="t" style="left:936.50px;top:808.60px;font-size:17.4px;color:#424242;letter-spacing:-0.009px;">Excellent match</span>
<div style="left:65px;top:828px;width:116.5px;height:24px;background:#ddf0dd"></div>
<span class="t" style="left:70.00px;top:832.55px;font-size:17.5px;color:#424242;letter-spacing:-0.220px;">A-18LI0141C</span>
<span class="t" style="left:186.70px;top:832.55px;font-size:17.5px;color:#424242;letter-spacing:-0.349px;">B-18LI0641C</span>
<span class="t" style="left:321.50px;top:832.55px;font-size:17.5px;color:#424242;letter-spacing:-0.544px;">86.7%</span>
<span class="t" style="left:411.80px;top:832.55px;font-size:17.5px;color:#424242;letter-spacing:-0.544px;">77.9%</span>
<span class="t" style="left:501.30px;top:832.55px;font-size:17.5px;color:#424242;letter-spacing:-0.544px;">96.4%</span>
<svg style="left:609px;top:831.6px" width="18.5" height="18" viewBox="0 0 18.5 18">
<circle cx="8.1" cy="9.9" r="7.7" fill="#ea4568"/><circle cx="8.1" cy="9.9" r="5.5" fill="#ead6e2"/>
<circle cx="8.1" cy="9.9" r="3.9" fill="#ea4568"/><circle cx="8.1" cy="9.9" r="2.2" fill="#e2cfdc"/><circle cx="8.1" cy="9.9" r="0.9" fill="#9a8f9d"/>
<path d="M8.5 9.5L13.4 4.6" stroke="#3fa4ee" stroke-width="2.6" stroke-linecap="round"/>
<path d="M11.2 5.4L12.4 0.8L14 0.2L14.5 2.2L16.2 1.2L16.3 3.2L18.2 3.2L17.4 5L13.2 7.4Z" fill="#3a90f0"/></svg>
<span class="t" style="left:636.60px;top:832.60px;font-size:17.4px;color:#424242;letter-spacing:0.250px;">View 5 candidates &amp; merge</span>
<svg style="left:909.1px;top:831.5px" width="18" height="17.4" viewBox="0 0 18 17.4">
<ellipse cx="9" cy="8.7" rx="8.95" ry="8.65" fill="url(#gGreen)"/></svg>
<span class="t" style="left:936.50px;top:832.60px;font-size:17.4px;color:#424242;letter-spacing:-0.009px;">Excellent match</span>
<div style="left:65px;top:852px;width:116.5px;height:24px;background:#ddf0dd"></div>
<span class="t" style="left:70.00px;top:856.55px;font-size:17.5px;color:#424242;letter-spacing:-0.206px;">A-18LI0141B</span>
<span class="t" style="left:186.70px;top:856.55px;font-size:17.5px;color:#424242;letter-spacing:-0.336px;">B-18LI0641B</span>
<span class="t" style="left:321.50px;top:856.55px;font-size:17.5px;color:#424242;letter-spacing:-0.544px;">86.7%</span>
<span class="t" style="left:411.80px;top:856.55px;font-size:17.5px;color:#424242;letter-spacing:-0.544px;">76.4%</span>
<span class="t" style="left:501.30px;top:856.55px;font-size:17.5px;color:#424242;letter-spacing:-0.544px;">95.5%</span>
<svg style="left:609px;top:855.6px" width="18.5" height="18" viewBox="0 0 18.5 18">
<circle cx="8.1" cy="9.9" r="7.7" fill="#ea4568"/><circle cx="8.1" cy="9.9" r="5.5" fill="#ead6e2"/>
<circle cx="8.1" cy="9.9" r="3.9" fill="#ea4568"/><circle cx="8.1" cy="9.9" r="2.2" fill="#e2cfdc"/><circle cx="8.1" cy="9.9" r="0.9" fill="#9a8f9d"/>
<path d="M8.5 9.5L13.4 4.6" stroke="#3fa4ee" stroke-width="2.6" stroke-linecap="round"/>
<path d="M11.2 5.4L12.4 0.8L14 0.2L14.5 2.2L16.2 1.2L16.3 3.2L18.2 3.2L17.4 5L13.2 7.4Z" fill="#3a90f0"/></svg>
<span class="t" style="left:636.60px;top:856.60px;font-size:17.4px;color:#424242;letter-spacing:0.250px;">View 5 candidates &amp; merge</span>
<svg style="left:909.1px;top:855.5px" width="18" height="17.4" viewBox="0 0 18 17.4">
<ellipse cx="9" cy="8.7" rx="8.95" ry="8.65" fill="url(#gGreen)"/></svg>
<span class="t" style="left:936.50px;top:856.60px;font-size:17.4px;color:#424242;letter-spacing:-0.009px;">Excellent match</span>
<div style="left:65px;top:876px;width:116.5px;height:24px;background:#ddf0dd"></div>
<span class="t" style="left:70.00px;top:880.55px;font-size:17.5px;color:#424242;letter-spacing:-0.077px;">A-18LI0141A</span>
<span class="t" style="left:186.70px;top:880.55px;font-size:17.5px;color:#424242;letter-spacing:-0.206px;">B-18LI0641A</span>
<span class="t" style="left:321.50px;top:880.55px;font-size:17.5px;color:#424242;letter-spacing:-0.544px;">86.7%</span>
<span class="t" style="left:411.80px;top:880.55px;font-size:17.5px;color:#424242;letter-spacing:-0.544px;">76.6%</span>
<span class="t" style="left:501.30px;top:880.55px;font-size:17.5px;color:#424242;letter-spacing:-0.544px;">95.7%</span>
<svg style="left:609px;top:879.6px" width="18.5" height="18" viewBox="0 0 18.5 18">
<circle cx="8.1" cy="9.9" r="7.7" fill="#ea4568"/><circle cx="8.1" cy="9.9" r="5.5" fill="#ead6e2"/>
<circle cx="8.1" cy="9.9" r="3.9" fill="#ea4568"/><circle cx="8.1" cy="9.9" r="2.2" fill="#e2cfdc"/><circle cx="8.1" cy="9.9" r="0.9" fill="#9a8f9d"/>
<path d="M8.5 9.5L13.4 4.6" stroke="#3fa4ee" stroke-width="2.6" stroke-linecap="round"/>
<path d="M11.2 5.4L12.4 0.8L14 0.2L14.5 2.2L16.2 1.2L16.3 3.2L18.2 3.2L17.4 5L13.2 7.4Z" fill="#3a90f0"/></svg>
<span class="t" style="left:636.60px;top:880.60px;font-size:17.4px;color:#424242;letter-spacing:0.250px;">View 5 candidates &amp; merge</span>
<svg style="left:909.1px;top:879.5px" width="18" height="17.4" viewBox="0 0 18 17.4">
<ellipse cx="9" cy="8.7" rx="8.95" ry="8.65" fill="url(#gGreen)"/></svg>
<span class="t" style="left:936.50px;top:880.60px;font-size:17.4px;color:#424242;letter-spacing:-0.009px;">Excellent match</span>
<div style="left:65px;top:900px;width:116.5px;height:24px;background:#ddf0dd"></div>
<span class="t" style="left:70.00px;top:904.55px;font-size:17.5px;color:#424242;letter-spacing:-0.132px;">A-18FI0111E</span>
<span class="t" style="left:186.70px;top:904.55px;font-size:17.5px;color:#424242;letter-spacing:-0.391px;">B-18FI0611E</span>
<span class="t" style="left:321.50px;top:904.55px;font-size:17.5px;color:#424242;letter-spacing:-0.544px;">86.7%</span>
<span class="t" style="left:411.80px;top:904.55px;font-size:17.5px;color:#424242;letter-spacing:-0.544px;">86.0%</span>
<span class="t" style="left:501.30px;top:904.55px;font-size:17.5px;color:#424242;letter-spacing:-0.444px;">101.3%</span>
<svg style="left:609px;top:903.6px" width="18.5" height="18" viewBox="0 0 18.5 18">
<circle cx="8.1" cy="9.9" r="7.7" fill="#ea4568"/><circle cx="8.1" cy="9.9" r="5.5" fill="#ead6e2"/>
<circle cx="8.1" cy="9.9" r="3.9" fill="#ea4568"/><circle cx="8.1" cy="9.9" r="2.2" fill="#e2cfdc"/><circle cx="8.1" cy="9.9" r="0.9" fill="#9a8f9d"/>
<path d="M8.5 9.5L13.4 4.6" stroke="#3fa4ee" stroke-width="2.6" stroke-linecap="round"/>
<path d="M11.2 5.4L12.4 0.8L14 0.2L14.5 2.2L16.2 1.2L16.3 3.2L18.2 3.2L17.4 5L13.2 7.4Z" fill="#3a90f0"/></svg>
<span class="t" style="left:636.60px;top:904.60px;font-size:17.4px;color:#424242;letter-spacing:0.250px;">View 5 candidates &amp; merge</span>
<svg style="left:909.1px;top:903.5px" width="18" height="17.4" viewBox="0 0 18 17.4">
<ellipse cx="9" cy="8.7" rx="8.95" ry="8.65" fill="url(#gGreen)"/></svg>
<span class="t" style="left:936.50px;top:904.60px;font-size:17.4px;color:#424242;letter-spacing:-0.009px;">Excellent match</span>
<div style="left:65px;top:924px;width:116.5px;height:24px;background:#ddf0dd"></div>
<span class="t" style="left:70.00px;top:928.55px;font-size:17.5px;color:#424242;letter-spacing:0.123px;">A-18FI0111D</span>
<span class="t" style="left:186.70px;top:928.55px;font-size:17.5px;color:#424242;letter-spacing:-0.138px;">B-18FI0611D</span>
<span class="t" style="left:321.50px;top:928.55px;font-size:17.5px;color:#424242;letter-spacing:-0.544px;">86.7%</span>
<span class="t" style="left:411.80px;top:928.55px;font-size:17.5px;color:#424242;letter-spacing:-0.544px;">87.5%</span>
<span class="t" style="left:501.30px;top:928.55px;font-size:17.5px;color:#424242;letter-spacing:-0.444px;">102.2%</span>
<svg style="left:609px;top:927.6px" width="18.5" height="18" viewBox="0 0 18.5 18">
<circle cx="8.1" cy="9.9" r="7.7" fill="#ea4568"/><circle cx="8.1" cy="9.9" r="5.5" fill="#ead6e2"/>
<circle cx="8.1" cy="9.9" r="3.9" fill="#ea4568"/><circle cx="8.1" cy="9.9" r="2.2" fill="#e2cfdc"/><circle cx="8.1" cy="9.9" r="0.9" fill="#9a8f9d"/>
<path d="M8.5 9.5L13.4 4.6" stroke="#3fa4ee" stroke-width="2.6" stroke-linecap="round"/>
<path d="M11.2 5.4L12.4 0.8L14 0.2L14.5 2.2L16.2 1.2L16.3 3.2L18.2 3.2L17.4 5L13.2 7.4Z" fill="#3a90f0"/></svg>
<span class="t" style="left:636.60px;top:928.60px;font-size:17.4px;color:#424242;letter-spacing:0.250px;">View 5 candidates &amp; merge</span>
<svg style="left:909.1px;top:927.5px" width="18" height="17.4" viewBox="0 0 18 17.4">
<ellipse cx="9" cy="8.7" rx="8.95" ry="8.65" fill="url(#gGreen)"/></svg>
<span class="t" style="left:936.50px;top:928.60px;font-size:17.4px;color:#424242;letter-spacing:-0.009px;">Excellent match</span>
<div style="left:65px;top:948px;width:116.5px;height:24px;background:#ddf0dd"></div>
<span class="t" style="left:70.00px;top:952.55px;font-size:17.5px;color:#424242;letter-spacing:-0.025px;">A-18FI0111C</span>
<span class="t" style="left:186.70px;top:952.55px;font-size:17.5px;color:#424242;letter-spacing:-0.286px;">B-18FI0611C</span>
<span class="t" style="left:321.50px;top:952.55px;font-size:17.5px;color:#424242;letter-spacing:-0.544px;">86.7%</span>
<span class="t" style="left:411.80px;top:952.55px;font-size:17.5px;color:#424242;letter-spacing:-0.544px;">87.1%</span>
<span class="t" style="left:501.30px;top:952.55px;font-size:17.5px;color:#424242;letter-spacing:-0.444px;">101.9%</span>
<svg style="left:609px;top:951.6px" width="18.5" height="18" viewBox="0 0 18.5 18">
<circle cx="8.1" cy="9.9" r="7.7" fill="#ea4568"/><circle cx="8.1" cy="9.9" r="5.5" fill="#ead6e2"/>
<circle cx="8.1" cy="9.9" r="3.9" fill="#ea4568"/><circle cx="8.1" cy="9.9" r="2.2" fill="#e2cfdc"/><circle cx="8.1" cy="9.9" r="0.9" fill="#9a8f9d"/>
<path d="M8.5 9.5L13.4 4.6" stroke="#3fa4ee" stroke-width="2.6" stroke-linecap="round"/>
<path d="M11.2 5.4L12.4 0.8L14 0.2L14.5 2.2L16.2 1.2L16.3 3.2L18.2 3.2L17.4 5L13.2 7.4Z" fill="#3a90f0"/></svg>
<span class="t" style="left:636.60px;top:952.60px;font-size:17.4px;color:#424242;letter-spacing:0.250px;">View 5 candidates &amp; merge</span>
<svg style="left:909.1px;top:951.5px" width="18" height="17.4" viewBox="0 0 18 17.4">
<ellipse cx="9" cy="8.7" rx="8.95" ry="8.65" fill="url(#gGreen)"/></svg>
<span class="t" style="left:936.50px;top:952.60px;font-size:17.4px;color:#424242;letter-spacing:-0.009px;">Excellent match</span>
<div style="left:65px;top:972px;width:116.5px;height:24px;background:#ddf0dd"></div>
<span class="t" style="left:70.00px;top:976.55px;font-size:17.5px;color:#424242;letter-spacing:-0.011px;">A-18FI0111B</span>
<span class="t" style="left:186.70px;top:976.55px;font-size:17.5px;color:#424242;letter-spacing:-0.270px;">B-18FI0611B</span>
<span class="t" style="left:321.50px;top:976.55px;font-size:17.5px;color:#424242;letter-spacing:-0.544px;">86.7%</span>
<span class="t" style="left:411.80px;top:976.55px;font-size:17.5px;color:#424242;letter-spacing:-0.544px;">83.6%</span>
<span class="t" style="left:501.30px;top:976.55px;font-size:17.5px;color:#424242;letter-spacing:-0.544px;">99.9%</span>
<svg style="left:609px;top:975.6px" width="18.5" height="18" viewBox="0 0 18.5 18">
<circle cx="8.1" cy="9.9" r="7.7" fill="#ea4568"/><circle cx="8.1" cy="9.9" r="5.5" fill="#ead6e2"/>
<circle cx="8.1" cy="9.9" r="3.9" fill="#ea4568"/><circle cx="8.1" cy="9.9" r="2.2" fill="#e2cfdc"/><circle cx="8.1" cy="9.9" r="0.9" fill="#9a8f9d"/>
<path d="M8.5 9.5L13.4 4.6" stroke="#3fa4ee" stroke-width="2.6" stroke-linecap="round"/>
<path d="M11.2 5.4L12.4 0.8L14 0.2L14.5 2.2L16.2 1.2L16.3 3.2L18.2 3.2L17.4 5L13.2 7.4Z" fill="#3a90f0"/></svg>
<span class="t" style="left:636.60px;top:976.60px;font-size:17.4px;color:#424242;letter-spacing:0.250px;">View 5 candidates &amp; merge</span>
<svg style="left:909.1px;top:975.5px" width="18" height="17.4" viewBox="0 0 18 17.4">
<ellipse cx="9" cy="8.7" rx="8.95" ry="8.65" fill="url(#gGreen)"/></svg>
<span class="t" style="left:936.50px;top:976.60px;font-size:17.4px;color:#424242;letter-spacing:-0.009px;">Excellent match</span>
<div style="left:65px;top:996px;width:116.5px;height:24px;background:#ddf0dd"></div>
<span class="t" style="left:70.00px;top:1000.55px;font-size:17.5px;color:#424242;letter-spacing:0.118px;">A-18FI0111A</span>
<span class="t" style="left:186.70px;top:1000.55px;font-size:17.5px;color:#424242;letter-spacing:-0.141px;">B-18FI0611A</span>
<span class="t" style="left:321.50px;top:1000.55px;font-size:17.5px;color:#424242;letter-spacing:-0.544px;">86.7%</span>
<span class="t" style="left:411.80px;top:1000.55px;font-size:17.5px;color:#424242;letter-spacing:-0.544px;">87.4%</span>
<span class="t" style="left:501.30px;top:1000.55px;font-size:17.5px;color:#424242;letter-spacing:-0.444px;">102.1%</span>
<svg style="left:609px;top:999.6px" width="18.5" height="18" viewBox="0 0 18.5 18">
<circle cx="8.1" cy="9.9" r="7.7" fill="#ea4568"/><circle cx="8.1" cy="9.9" r="5.5" fill="#ead6e2"/>
<circle cx="8.1" cy="9.9" r="3.9" fill="#ea4568"/><circle cx="8.1" cy="9.9" r="2.2" fill="#e2cfdc"/><circle cx="8.1" cy="9.9" r="0.9" fill="#9a8f9d"/>
<path d="M8.5 9.5L13.4 4.6" stroke="#3fa4ee" stroke-width="2.6" stroke-linecap="round"/>
<path d="M11.2 5.4L12.4 0.8L14 0.2L14.5 2.2L16.2 1.2L16.3 3.2L18.2 3.2L17.4 5L13.2 7.4Z" fill="#3a90f0"/></svg>
<span class="t" style="left:636.60px;top:1000.60px;font-size:17.4px;color:#424242;letter-spacing:0.250px;">View 5 candidates &amp; merge</span>
<svg style="left:909.1px;top:999.5px" width="18" height="17.4" viewBox="0 0 18 17.4">
<ellipse cx="9" cy="8.7" rx="8.95" ry="8.65" fill="url(#gGreen)"/></svg>
<span class="t" style="left:936.50px;top:1000.60px;font-size:17.4px;color:#424242;letter-spacing:-0.009px;">Excellent match</span>
<span class="t" style="left:70.00px;top:1024.55px;font-size:17.5px;color:#161616;letter-spacing:-0.455px;">A-18ESV5165</span>
<span class="t" style="left:186.70px;top:1024.55px;font-size:17.5px;color:#161616;letter-spacing:-0.584px;">B-18ESV5265</span>
<span class="t" style="left:321.50px;top:1024.55px;font-size:17.5px;color:#161616;letter-spacing:-0.544px;">73.3%</span>
<span class="t" style="left:411.80px;top:1024.55px;font-size:17.5px;color:#161616;letter-spacing:-0.544px;">38.9%</span>
<span class="t" style="left:501.30px;top:1024.55px;font-size:17.5px;color:#161616;letter-spacing:-0.544px;">52.6%</span>
<svg style="left:609px;top:1023.6px" width="18.5" height="18" viewBox="0 0 18.5 18">
<circle cx="8.1" cy="9.9" r="7.7" fill="#ea4568"/><circle cx="8.1" cy="9.9" r="5.5" fill="#ead6e2"/>
<circle cx="8.1" cy="9.9" r="3.9" fill="#ea4568"/><circle cx="8.1" cy="9.9" r="2.2" fill="#e2cfdc"/><circle cx="8.1" cy="9.9" r="0.9" fill="#9a8f9d"/>
<path d="M8.5 9.5L13.4 4.6" stroke="#3fa4ee" stroke-width="2.6" stroke-linecap="round"/>
<path d="M11.2 5.4L12.4 0.8L14 0.2L14.5 2.2L16.2 1.2L16.3 3.2L18.2 3.2L17.4 5L13.2 7.4Z" fill="#3a90f0"/></svg>
<span class="t" style="left:636.60px;top:1024.60px;font-size:17.4px;color:#161616;letter-spacing:0.250px;">View 5 candidates &amp; merge</span>
<svg style="left:909.1px;top:1023.5px" width="18" height="17.4" viewBox="0 0 18 17.4">
<ellipse cx="9" cy="8.7" rx="8.95" ry="8.65" fill="url(#gRed)"/></svg>
<span class="t" style="left:936.50px;top:1024.60px;font-size:17.4px;color:#161616;letter-spacing:0.171px;">Low match</span>
<span class="t" style="left:70.00px;top:1048.55px;font-size:17.5px;color:#161616;letter-spacing:-0.455px;">A-18ESV5164</span>
<span class="t" style="left:186.70px;top:1048.55px;font-size:17.5px;color:#161616;letter-spacing:-0.584px;">B-18ESV5665</span>
<span class="t" style="left:321.50px;top:1048.55px;font-size:17.5px;color:#161616;letter-spacing:-0.544px;">80.8%</span>
<span class="t" style="left:411.80px;top:1048.55px;font-size:17.5px;color:#161616;letter-spacing:-0.544px;">36.6%</span>
<span class="t" style="left:501.30px;top:1048.55px;font-size:17.5px;color:#161616;letter-spacing:-0.544px;">69.3%</span>
<svg style="left:609px;top:1047.6px" width="18.5" height="18" viewBox="0 0 18.5 18">
<circle cx="8.1" cy="9.9" r="7.7" fill="#ea4568"/><circle cx="8.1" cy="9.9" r="5.5" fill="#ead6e2"/>
<circle cx="8.1" cy="9.9" r="3.9" fill="#ea4568"/><circle cx="8.1" cy="9.9" r="2.2" fill="#e2cfdc"/><circle cx="8.1" cy="9.9" r="0.9" fill="#9a8f9d"/>
<path d="M8.5 9.5L13.4 4.6" stroke="#3fa4ee" stroke-width="2.6" stroke-linecap="round"/>
<path d="M11.2 5.4L12.4 0.8L14 0.2L14.5 2.2L16.2 1.2L16.3 3.2L18.2 3.2L17.4 5L13.2 7.4Z" fill="#3a90f0"/></svg>
<span class="t" style="left:636.60px;top:1048.60px;font-size:17.4px;color:#161616;letter-spacing:0.250px;">View 5 candidates &amp; merge</span>
<svg style="left:909.1px;top:1047.5px" width="18" height="17.4" viewBox="0 0 18 17.4">
<ellipse cx="9" cy="8.7" rx="8.95" ry="8.65" fill="url(#gRed)"/></svg>
<span class="t" style="left:936.50px;top:1048.60px;font-size:17.4px;color:#161616;letter-spacing:0.171px;">Low match</span>
<div style="left:65px;top:1068px;width:1710.3px;height:24px;background:#a9d5fb"></div>
<span class="t" style="left:70.00px;top:1072.55px;font-size:17.5px;color:#161616;letter-spacing:-0.455px;">A-18ESV5163</span>
<span class="t" style="left:186.70px;top:1072.55px;font-size:17.5px;color:#161616;letter-spacing:-0.584px;">B-18ESV5263</span>
<span class="t" style="left:321.50px;top:1072.55px;font-size:17.5px;color:#161616;letter-spacing:-0.544px;">73.3%</span>
<span class="t" style="left:411.80px;top:1072.55px;font-size:17.5px;color:#161616;letter-spacing:-0.544px;">38.0%</span>
<span class="t" style="left:501.30px;top:1072.55px;font-size:17.5px;color:#161616;letter-spacing:-0.544px;">52.1%</span>
<svg style="left:609px;top:1071px" width="18.6" height="18.6" viewBox="0 0 18.6 18.6">
<path d="M9.3 2.4L11.5 6.9L16.3 7.5L12.8 10.9L13.7 15.8L9.3 13.4L4.9 15.8L5.8 10.9L2.3 7.5L7.1 6.9Z" fill="url(#gStar)" stroke="url(#gStar)" stroke-width="3.4" stroke-linejoin="round"/></svg>
<span class="t" style="left:636.60px;top:1072.60px;font-size:17.4px;color:#1a73e8;letter-spacing:0.140px;">Preferred #5 • View 5 candidat...</span>
<svg style="left:909px;top:1071.3px" width="18.6" height="18.6" viewBox="0 0 18.6 18.6">
<path d="M9.3 2.4L11.5 6.9L16.3 7.5L12.8 10.9L13.7 15.8L9.3 13.4L4.9 15.8L5.8 10.9L2.3 7.5L7.1 6.9Z" fill="url(#gStar)" stroke="url(#gStar)" stroke-width="3.4" stroke-linejoin="round"/></svg>
<span class="t" style="left:936.50px;top:1072.60px;font-size:17.4px;color:#161616;letter-spacing:-0.173px;">User Choice</span>
<div style="left:65px;top:1092px;width:1710.3px;height:24px;background:#ffefc6"></div>
<span class="t" style="left:70.00px;top:1096.55px;font-size:17.5px;color:#161616;letter-spacing:-0.455px;">A-18ESV5160</span>
<div style="left:182px;top:1092.5px;width:135px;height:23px;background:#f8dfca;border:1.2px solid #d9a9b0;border-radius:3px"></div>
<svg style="left:189px;top:1096px" width="19" height="17" viewBox="0 0 19 17">
<path d="M2.2 2.2L16.8 14.8M16.8 2.2L2.2 14.8" stroke="#f2496e" stroke-width="3.6" stroke-linecap="round"/></svg>
<span class="t" style="left:216.70px;top:1096.60px;font-size:17.4px;color:#161616;letter-spacing:-0.078px;">Empty</span>
<span class="t" style="left:322.70px;top:1094.30px;font-size:20px;color:#161616;letter-spacing:-0.190px;">---</span>
<span class="t" style="left:413.00px;top:1094.30px;font-size:20px;color:#161616;letter-spacing:-0.190px;">---</span>
<span class="t" style="left:502.50px;top:1094.30px;font-size:20px;color:#161616;letter-spacing:-0.190px;">---</span>
<span class="t" style="left:607.20px;top:1096.60px;font-size:17.4px;color:#161616;letter-spacing:0.095px;">Keep empty</span>
<svg style="left:909.1px;top:1095.6px" width="18" height="17.4" viewBox="0 0 18 17.4">
<ellipse cx="9" cy="8.7" rx="7.25" ry="6.95" fill="none" stroke="url(#gRing)" stroke-width="3.4"/></svg>
<span class="t" style="left:936.50px;top:1096.60px;font-size:17.4px;color:#161616;letter-spacing:0.435px;">No match</span>
<div style="left:22px;top:798.5px;width:1.2px;height:2px;background:#a8a8a8"></div>
<div style="left:22px;top:803.0px;width:1.2px;height:1px;background:#a8a8a8"></div>
<div style="left:22px;top:807.5px;width:1.2px;height:2px;background:#a8a8a8"></div>
<div style="left:22px;top:812.0px;width:1.2px;height:1px;background:#a8a8a8"></div>
<div style="left:22px;top:816.5px;width:1.2px;height:2px;background:#a8a8a8"></div>
<div style="left:22px;top:821.0px;width:1.2px;height:1px;background:#a8a8a8"></div>
<div style="left:26.5px;top:1173.2px;width:1577px;height:44.5px;background:#fff;border:1.2px solid #c7ced6;border-radius:6px"></div>
<span class="t" style="left:39.30px;top:1188.60px;font-size:17.4px;color:#9a9a9a;letter-spacing:0.113px;">Highlight text in current view... (Press Enter to cycle)</span>
<div style="left:1612px;top:1170.4px;width:165.7px;height:49.8px;background:#fafafa;border:1.2px solid #d2d2d2;border-radius:7px"></div>
<svg style="left:1634.1px;top:1187.8px" width="18" height="17.2" viewBox="0 0 18 17.2">
<path d="M0.2 1.6A1.4 1.4 0 0 1 1.6 0.2H15.2L17.8 2.6V15.8A1.2 1.2 0 0 1 16.6 17H1.4A1.2 1.2 0 0 1 0.2 15.8Z" fill="url(#gFlop)"/>
<rect x="3.1" y="0.2" width="11.8" height="6.5" fill="#2b1a57"/><rect x="6.1" y="0.2" width="4.9" height="6" fill="#e2d8ef"/><rect x="13.6" y="0.2" width="1.3" height="6" fill="#d6cce6"/>
<rect x="2.9" y="8.4" width="12.6" height="8.6" fill="#dacbea"/><rect x="2.9" y="8.4" width="12.6" height="2.5" fill="url(#gFlopR)"/></svg>
<span class="t" style="left:1661.50px;top:1188.60px;font-size:17.4px;color:#2a2a2a;letter-spacing:-0.520px;">Save Results</span>
</div></div>
</body></html>
